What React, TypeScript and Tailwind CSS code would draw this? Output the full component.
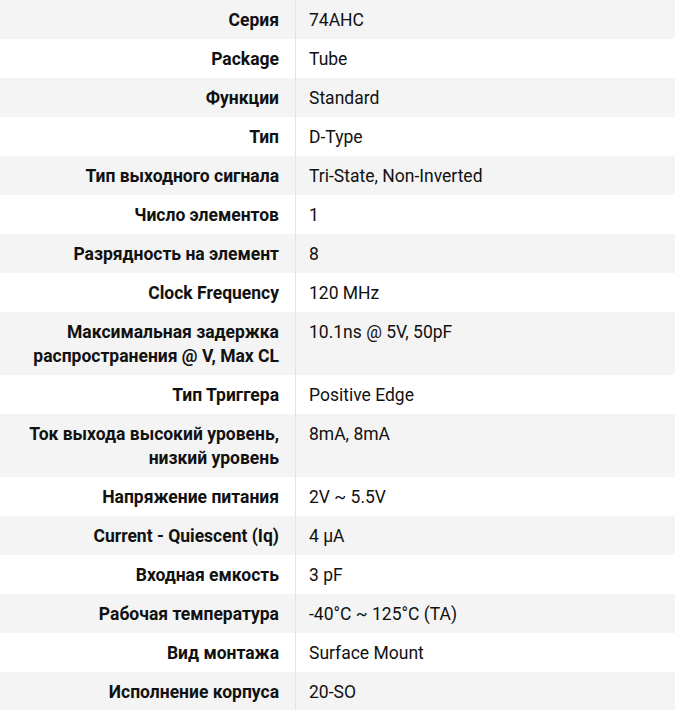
import React from "react";

const rows: [React.ReactNode, string][] = [
  ["Серия", "74AHC"],
  ["Package", "Tube"],
  ["Функции", "Standard"],
  ["Тип", "D-Type"],
  ["Тип выходного сигнала", "Tri-State, Non-Inverted"],
  ["Число элементов", "1"],
  ["Разрядность на элемент", "8"],
  ["Clock Frequency", "120 MHz"],
  [<>Максимальная задержка<br />распространения @ V, Max CL</>, "10.1ns @ 5V, 50pF"],
  ["Тип Триггера", "Positive Edge"],
  [<>Ток выхода высокий уровень,<br />низкий уровень</>, "8mA, 8mA"],
  ["Напряжение питания", "2V ~ 5.5V"],
  ["Current - Quiescent (Iq)", "4 µA"],
  ["Входная емкость", "3 pF"],
  ["Рабочая температура", "-40°C ~ 125°C (TA)"],
  ["Вид монтажа", "Surface Mount"],
  ["Исполнение корпуса", "20-SO"],
];

export default function App() {
  return (
    <div
      className="w-[675px] h-[710px] overflow-hidden bg-white text-[17.5px] leading-6 text-[#111]"
      style={{ fontFamily: "Roboto, sans-serif" }}
    >
      {rows.map(([k, v], i) => (
        <div key={i} className={`flex ${i % 2 === 0 ? "bg-[#f4f4f4]" : "bg-white"}`}>
          <div className="w-[296px] shrink-0 border-r border-[#e3e3e3] pr-[16px] pl-4 py-[7.5px] text-right font-bold">
            {k}
          </div>
          <div className="flex-1 pl-[13px] pr-4 py-[7.5px]">{v}</div>
        </div>
      ))}
    </div>
  );
}
